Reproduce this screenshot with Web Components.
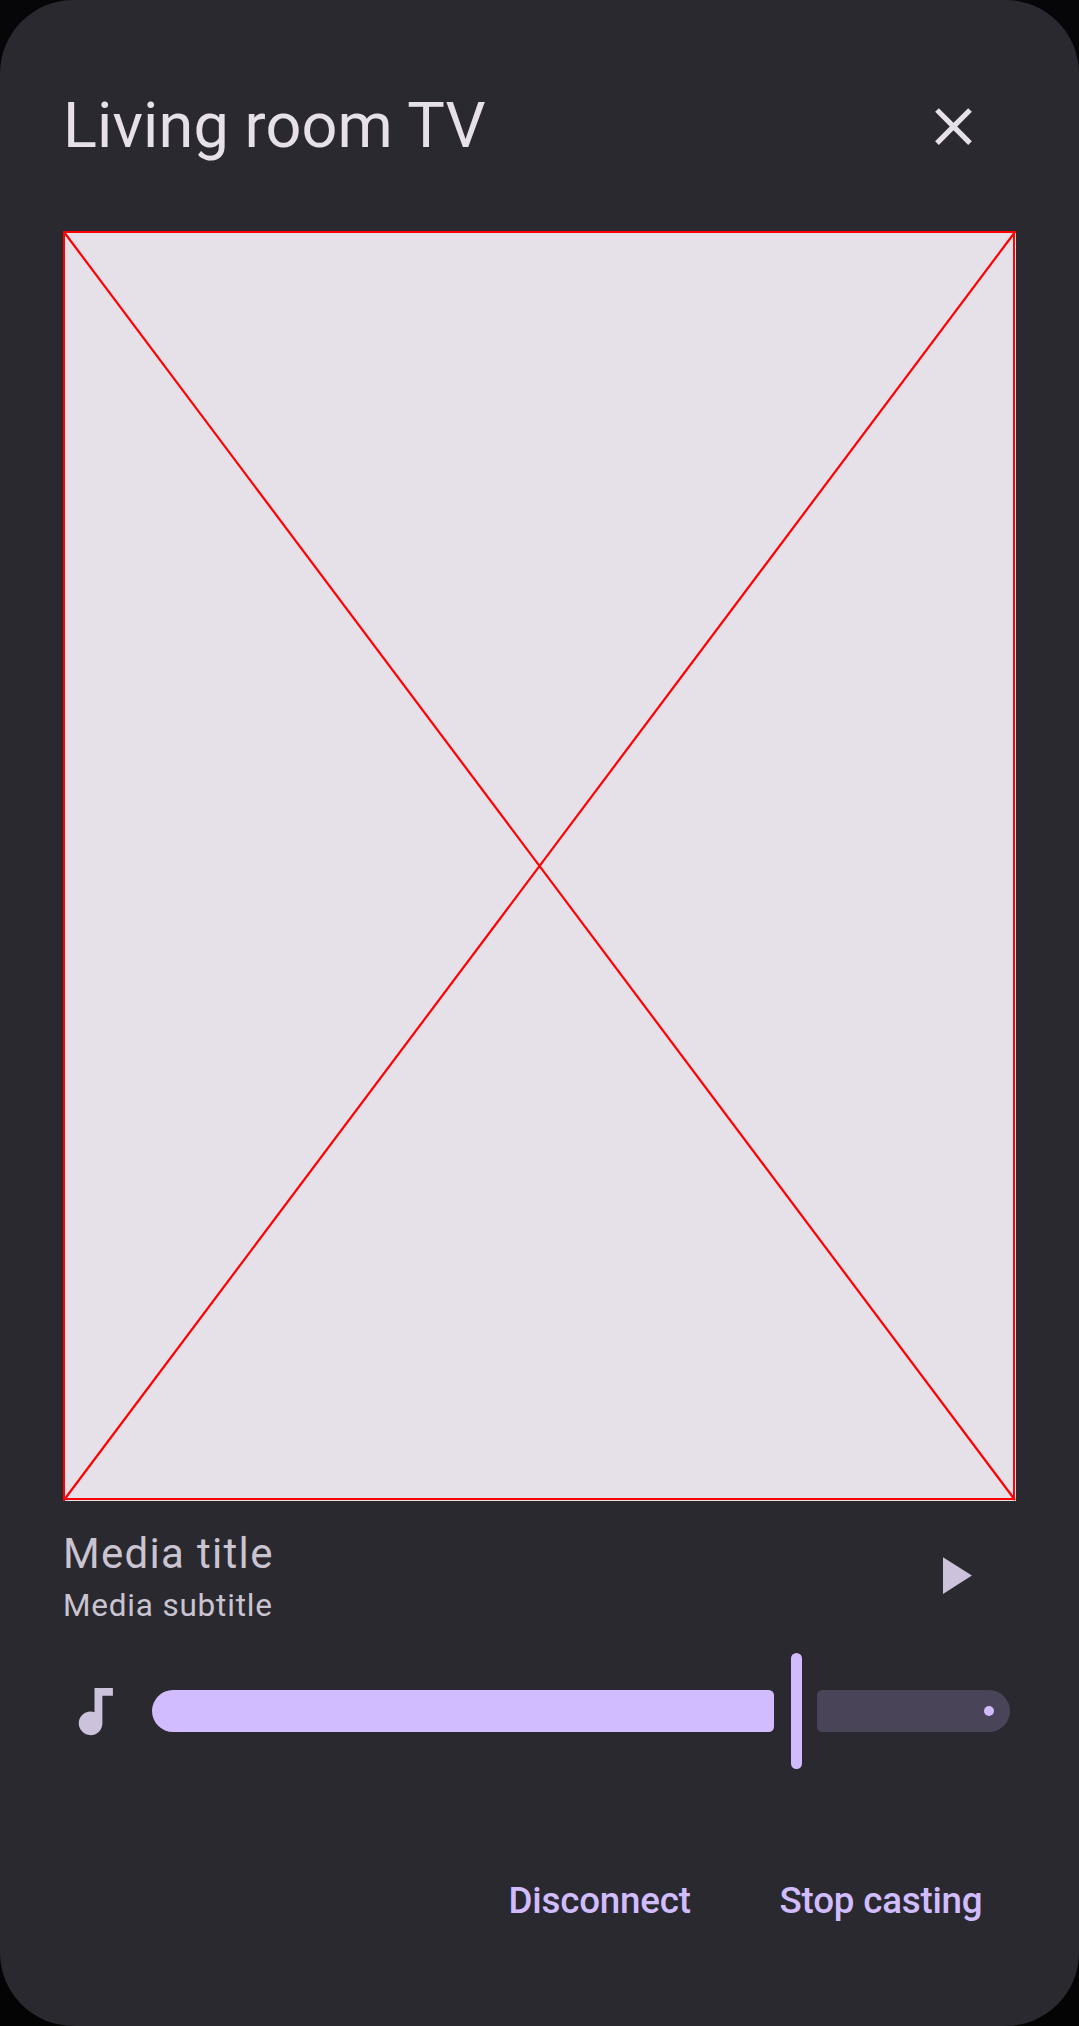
<!DOCTYPE html>
<html lang="en">
<head>
<meta charset="utf-8">
<title>Living room TV</title>
<style>
html, body { margin: 0; height: 100%; }
body { background: linear-gradient(#060608, #040405); font-family: Roboto, sans-serif; overflow: hidden; }
</style>
</head>
<body>
<cast-dialog></cast-dialog>

<template id="cast-dialog">
<style>
:host { display: block; }
.sheet { box-sizing: border-box; width: 1079px; height: 2026px; border-radius: 73.5px; background: #2b2930; padding: 63px 63px 0; display: flex; flex-direction: column; }
.sheet > * { flex: none; }
header { display: flex; align-items: center; height: 126px; margin-bottom: 42px; }
h1 { flex: 1; margin: 0; font-weight: 400; font-size: 63px; line-height: 84px; letter-spacing: .1px; color: #e6e0e9; }
.media { display: flex; align-items: center; height: 126px; margin-top: 11px; }
.volume { display: flex; align-items: center; height: 126px; margin-top: 10px; gap: 26px; }
.volume m-icon { margin-top: 1px; }
.actions { display: flex; justify-content: flex-end; height: 126px; margin-top: 64px; padding-right: 33.5px; gap: 88.7px; }
</style>
<div class="sheet">
  <header>
    <h1>Living room TV</h1>
    <icon-button name="close" style="color:#e6e0e9"></icon-button>
  </header>
  <art-placeholder></art-placeholder>
  <div class="media">
    <media-info><span slot="title">Media title</span><span slot="subtitle">Media subtitle</span></media-info>
    <icon-button name="play" style="color:#ccc2dc"></icon-button>
  </div>
  <div class="volume">
    <m-icon name="audio" style="color:#ccc2dc"></m-icon>
    <volume-slider></volume-slider>
  </div>
  <div class="actions">
    <text-button>Disconnect</text-button>
    <text-button>Stop casting</text-button>
  </div>
</div>
</template>

<script>
const ICONS = {
  close: 'M19 6.41L17.59 5 12 10.59 6.41 5 5 6.41 10.59 12 5 17.59 6.41 19 12 13.41 17.59 19 19 17.59 13.41 12z',
  play: 'M8 5v14l11-7z',
  audio: 'M12 3v9.28c-.47-.17-.97-.28-1.5-.28C8.01 12 6 14.01 6 16.5S8.01 21 10.5 21c2.31 0 4.2-1.75 4.45-4H15V6h4V3h-7z'
};

function define(name, render) {
  customElements.define(name, class extends HTMLElement {
    constructor() { super(); this.attachShadow({ mode: 'open' }); }
    connectedCallback() { this.shadowRoot.innerHTML = render(this); }
  });
}

define('m-icon', el => `
<style>:host { display: block; flex: none; width: 63px; height: 63px; } svg { display: block; width: 100%; height: 100%; fill: currentColor; }</style>
<svg viewBox="0 0 24 24"><path d="${ICONS[el.getAttribute('name')]}"/></svg>`);

define('icon-button', el => `
<style>:host { display: block; flex: none; } button { all: unset; display: grid; place-items: center; width: 126px; height: 126px; color: inherit; }</style>
<button aria-label="${el.getAttribute('name')}"><m-icon name="${el.getAttribute('name')}"></m-icon></button>`);

define('art-placeholder', () => `
<style>:host { display: block; flex: none; width: 953px; height: 1270px; background: #e6e0e9; } svg { display: block; }</style>
<svg width="953" height="1270" fill="none" stroke="#f00" stroke-width="2">
  <path d="M0 1H953M1 0V1270M951 0V1269M0 1268H952" shape-rendering="crispEdges"/>
  <path d="M1 1L952 1269M952 1L1 1269" stroke-width="2.2"/>
</svg>`);

define('media-info', () => `
<style>
:host { flex: 1; display: flex; flex-direction: column; margin-bottom: 2px; color: #cac4d0; }
.title { font-size: 42px; line-height: 63px; letter-spacing: 1.3125px; }
.subtitle { font-size: 31.5px; line-height: 42px; letter-spacing: .8px; }
</style>
<div class="title"><slot name="title"></slot></div>
<div class="subtitle"><slot name="subtitle"></slot></div>`);

define('volume-slider', () => `
<style>
:host { display: flex; align-items: center; width: 858px; height: 116px; }
.active { width: 622.4px; height: 42px; background: #d0bcff; border-radius: 21px 5.25px 5.25px 21px; }
.thumb { width: 11px; height: 116px; margin: 0 14.7px 0 16.6px; background: #d0bcff; border-radius: 5.5px; }
.rest { flex: 1; height: 42px; display: flex; align-items: center; justify-content: flex-end; background: #4a4458; border-radius: 5.25px 21px 21px 5.25px; }
.stop { width: 10.5px; height: 10.5px; margin-right: 15.75px; border-radius: 50%; background: #d0bcff; }
</style>
<div class="active"></div><div class="thumb"></div><div class="rest"><div class="stop"></div></div>`);

define('text-button', () => `
<style>
:host { display: block; }
button { all: unset; display: flex; align-items: center; height: 126px; white-space: nowrap; color: #d0bcff; font: 500 36.75px/52.5px Roboto, sans-serif; letter-spacing: -.21px; }
</style>
<button><slot></slot></button>`);

customElements.define('cast-dialog', class extends HTMLElement {
  constructor() {
    super();
    this.attachShadow({ mode: 'open' }).append(document.getElementById('cast-dialog').content.cloneNode(true));
  }
});
</script>
</body>
</html>
